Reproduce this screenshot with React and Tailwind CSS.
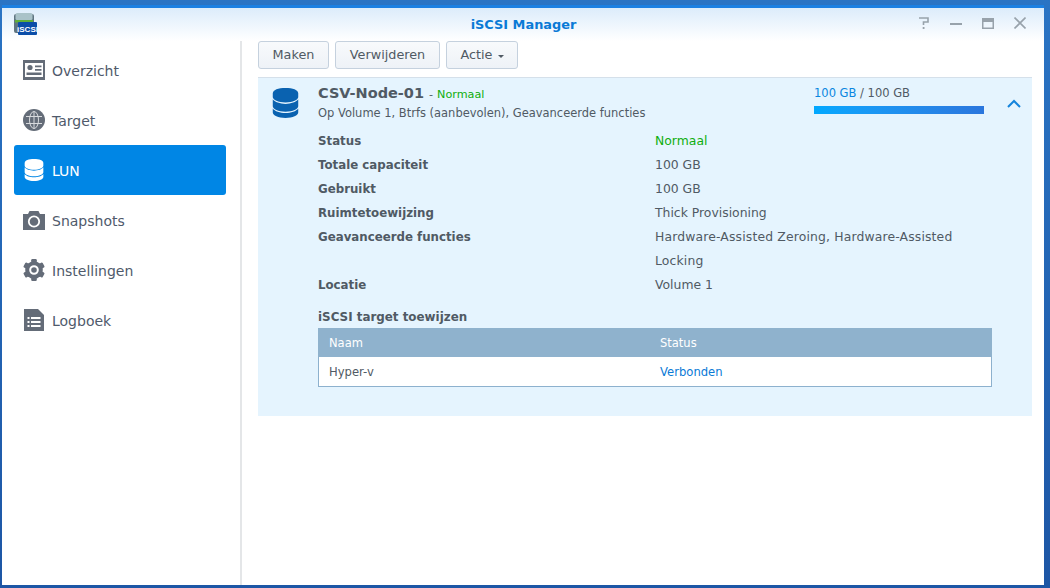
import React from "react";

const font = { fontFamily: '"DejaVu Sans", Verdana, sans-serif' };

function Db({ color, size = 22, h = 24 }) {
  return (
    <svg width={size} height={h} viewBox="0 0 28 33" fill="none">
      <path d="M0 6C0 2 6 0 14 0s14 2 14 6v4c0 3-6 6-14 6S0 13 0 10z" fill={color} />
      <path d="M0 12.500c2 3 8 5 14 5s12-2 14-5V20c0 3-6 6-14 6S0 23 0 20z" fill={color} />
      <path d="M0 22.500c2 3 8 5 14 5s12-2 14-5V27c0 3-6 6-14 6S0 30 0 27z" fill={color} />
    </svg>
  );
}

const IconOverview = () => (
  <svg width="22" height="20" viewBox="0 0 22 20">
    <path fillRule="evenodd" d="M0 0h22v20H0zM2 3v14h18V3z" fill="#646c78" />
    <circle cx="7" cy="7.500" r="2.600" fill="#646c78" />
    <path d="M12 5.500h6.500v1.800H12zM12 9h6.500v1.800H12zM3.500 12.500h15v2.500h-15z" fill="#646c78" />
  </svg>
);
const IconGlobe = () => (
  <svg width="22" height="22" viewBox="0 0 22 22">
    <circle cx="11" cy="11" r="11" fill="#646c78" />
    <g stroke="#fff" strokeWidth="1" fill="none" opacity=".75">
      <ellipse cx="11" cy="11" rx="4.500" ry="8.500" />
      <path d="M11 2.500v17M3 7.500h16M3 14.500h16" />
    </g>
  </svg>
);
const IconCamera = () => (
  <svg width="22" height="19" viewBox="0 0 22 19">
    <path d="M0 3h5l1.500-3h9L17 3h5v16H0z" fill="#646c78" />
    <circle cx="11" cy="10.500" r="5.200" fill="none" stroke="#fff" strokeWidth="1.800" />
  </svg>
);
const IconGear = () => (
  <svg width="22" height="22" viewBox="0 0 22 22">
    <g fill="#646c78">
      <circle cx="11" cy="11" r="8.800" />
      <rect x="8.200" y="0" width="5.600" height="22" rx="1.200" />
      <rect x="8.200" y="0" width="5.600" height="22" rx="1.200" transform="rotate(60 11 11)" />
      <rect x="8.200" y="0" width="5.600" height="22" rx="1.200" transform="rotate(120 11 11)" />
    </g>
    <circle cx="11" cy="11" r="3.800" fill="none" stroke="#fff" strokeWidth="2" />
  </svg>
);
const IconLog = () => (
  <svg width="20" height="22" viewBox="0 0 20 22">
    <path d="M0 0h14l6 6v16H0z" fill="#646c78" />
    <path d="M3.500 8h2v2h-2zM7 8h9.500v2H7zM3.500 12h2v2h-2zM7 12h9.500v2H7zM3.500 16h2v2h-2zM7 16h9.500v2H7z" fill="#fff" />
  </svg>
);

const nav = [
  ["Overzicht", <IconOverview />],
  ["Target", <IconGlobe />],
  ["LUN", <Db color="#fff" size={20} h={22} />, true],
  ["Snapshots", <IconCamera />],
  ["Instellingen", <IconGear />],
  ["Logboek", <IconLog />],
];

const rows = [
  ["Status", <span className="text-[#0fae0f]">Normaal</span>],
  ["Totale capaciteit", "100 GB"],
  ["Gebruikt", "100 GB"],
  ["Ruimtetoewijzing", "Thick Provisioning"],
  [
    "Geavanceerde functies",
    <span className="tracking-[0.15px]">Hardware-Assisted Zeroing, Hardware-Assisted Locking</span>,
  ],
  ["Locatie", "Volume 1"],
];

function Btn({ className, children }) {
  return (
    <button className={`flex h-[28px] items-center justify-center rounded-[3px] border border-[#c5d1de] bg-gradient-to-b from-[#f8fafc] to-[#eef2f7] text-[12.800px] text-[#505a64] ${className}`}>
      {children}
    </button>
  );
}

export default function App() {
  return (
    <div
      style={font}
      className="h-[588px] w-[1050px] overflow-hidden bg-gradient-to-b from-[#2a74c4] to-[#1d56a5] pb-[3px] pl-[2px] pr-[6px] pt-[5px]"
    >
      <div className="flex h-full flex-col border-t-[3px] border-[#1c80e2] bg-white">
        <header className="relative flex h-[33px] shrink-0 items-center justify-center bg-gradient-to-b from-[#dcecfb] to-white">
          <svg className="absolute left-[12px] top-[5px]" width="23" height="22" viewBox="0 0 23 22">
            <rect x="0" y="1" width="20" height="19" rx="2" fill="#5f7480" />
            <rect x="1.500" y="0" width="17" height="7" rx="1.500" fill="#a9c2c8" />
            <rect x="1" y="7" width="18" height="2.500" fill="#5fae3a" />
            <rect x="4" y="9" width="19" height="13" rx="1" fill="#0b4ea8" />
            <text x="13.500" y="18.800" textAnchor="middle" fontSize="8" fontWeight="700" fill="#fff" fontFamily="Liberation Sans, sans-serif">iSCSI</text>
          </svg>
          <span className="ml-[1px] text-[12.900px] font-bold text-[#0a7ad6]">iSCSI Manager</span>
          <div className="absolute right-[18px] top-[9px] flex items-center gap-[20px]">
            <svg width="12" height="12" viewBox="0 0 12 12" fill="none" stroke="#98a2ab" strokeWidth="1.600">
              <path d="M1 1h9v4H5.500v3" />
              <path d="M4.700 10h1.800v2H4.700z" fill="#98a2ab" stroke="none" />
            </svg>
            <svg width="12" height="12" viewBox="0 0 12 12"><path d="M0 6h12v2H0z" fill="#98a2ab" /></svg>
            <svg width="12" height="12" viewBox="0 0 12 12"><path fillRule="evenodd" d="M0 1h12v11H0zM1.500 5v5.500h9V5z" fill="#98a2ab" /></svg>
            <svg width="12" height="12" viewBox="0 0 12 12" stroke="#98a2ab" strokeWidth="1.600"><path d="M.5.500l11 11M11.500.500l-11 11" /></svg>
          </div>
        </header>
        <div className="flex min-h-0 flex-1">
          <aside className="w-[240px] shrink-0 border-r-2 border-[#e4e6e8] pl-[12px] pr-[14px] pt-[4px]">
            {nav.map(([label, icon, active]) => (
              <div
                key={label}
                className={`flex h-[50px] items-center rounded-[3px] pl-[9px] text-[14px] ${active ? "bg-[#0086e5] text-white" : "text-[#4f5a6b]"}`}
              >
                <span className="flex w-[22px] justify-center">{icon}</span>
                <span className="ml-[7px] mt-[2px]">{label}</span>
              </div>
            ))}
          </aside>
          <main className="min-w-0 flex-1 pl-[16px] pr-[12px]">
            <div className="flex gap-[6px]">
              <Btn className="w-[71px]">Maken</Btn>
              <Btn className="w-[105px]">Verwijderen</Btn>
              <Btn className="w-[72px] gap-[5px]">
                Actie
                <span className="mt-[2px] border-x-[3px] border-t-[3px] border-x-transparent border-t-[#505a64]" />
              </Btn>
            </div>
            <section className="mt-[8px] h-[339px] border-t border-[#d5e0ea] bg-[#e5f4fe] pl-[14px] text-[#505a64]">
              <div className="flex">
                <div className="w-[46px] shrink-0 pt-[10px]">
                  <Db color="#0a62b0" size={27} h={30} />
                </div>
                <div className="flex w-[496px] shrink-0 flex-col pt-[5px]">
                  <div className="flex items-baseline">
                    <span className="text-[14.500px] font-bold text-[#505a64]">CSV-Node-01</span>
                    <span className="ml-[5px] text-[11.200px]">-</span>
                    <span className="ml-[4px] text-[11.200px] text-[#0fae0f]">Normaal</span>
                  </div>
                  <div className="text-[11.480px]">Op Volume 1, Btrfs (aanbevolen), Geavanceerde functies</div>
                </div>
                <div className="w-[170px] shrink-0 pt-[7px]">
                  <div className="text-[11.500px]">
                    <span className="text-[#0a86e0]">100 GB</span> / 100 GB
                  </div>
                  <div className="mt-[4px] h-[8px] bg-gradient-to-r from-[#00a8ff] to-[#2b76dd]" />
                </div>
                <svg className="ml-[23px] mt-[21px]" width="14" height="9" viewBox="0 0 14 9" fill="none" stroke="#1484dc" strokeWidth="2">
                  <path d="M1 8l6-6 6 6" />
                </svg>
              </div>
              <div className="ml-[46px] mt-[7px] w-[674px]">
                {rows.map(([k, v]) => (
                  <div key={k} className="grid grid-cols-[337px_1fr] text-[12.400px] leading-[24px]">
                    <div className="text-[11.800px] font-bold">{k}</div>
                    <div className="w-[320px]">{v}</div>
                  </div>
                ))}
                <div className="mt-[9px] text-[11.900px] font-bold leading-[22px]">iSCSI target toewijzen</div>
                <div className="border-x border-b border-[#8db1ce]">
                  <div className="-mx-px grid h-[29px] grid-cols-[331px_1fr] items-center bg-[#8fb2cd] pl-[11px] pt-[3px] text-[11.500px] text-white">
                    <span>Naam</span>
                    <span>Status</span>
                  </div>
                  <div className="grid h-[29px] grid-cols-[331px_1fr] items-center bg-white pl-[10px] pt-[2px] text-[11.600px]">
                    <span>Hyper-v</span>
                    <span className="text-[#0a7ad6]">Verbonden</span>
                  </div>
                </div>
              </div>
            </section>
          </main>
        </div>
      </div>
    </div>
  );
}
